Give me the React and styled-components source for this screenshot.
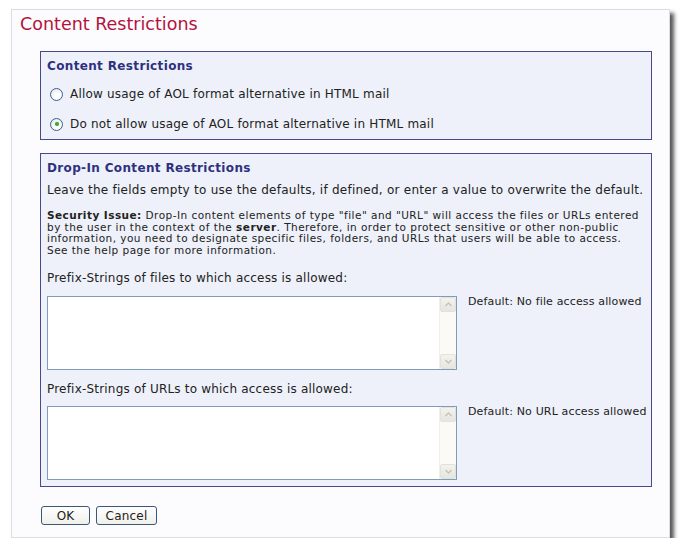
import React from 'react'
import styled, { createGlobalStyle } from 'styled-components'

const GlobalStyle = createGlobalStyle`
  body {
    margin: 0;
    background: #ffffff;
    font-family: "DejaVu Sans", Verdana, sans-serif;
    color: #222;
  }
`

const Page = styled.div`
  padding: 9px 0 0 11px;
`

const Panel = styled.div`
  width: 659px;
  height: 529px;
  box-sizing: border-box;
  background: #fcfbfe;
  border: 1px solid #dcdce2;
  box-shadow: 4px 4px 4px rgba(30, 30, 30, 0.75);
  padding: 3px 17px 0 8px;
`

const Title = styled.h1`
  margin: 0;
  font-size: 17.5px;
  font-weight: normal;
  line-height: 22px;
  color: #b3123c;
`

const Body = styled.div`
  padding: 16px 0 0 20px;
  display: flex;
  flex-direction: column;
  gap: 13px;
`

const Section = styled.fieldset`
  margin: 0;
  min-width: 0;
  border: 1px solid #48488a;
  background: #eef1f9;
  padding: ${p => p.$pad || '4px 6px'};
  display: flex;
  flex-direction: column;
`

const SectionTitle = styled.div`
  font-size: 12px;
  font-weight: bold;
  letter-spacing: 0.35px;
  color: #2e3180;
  line-height: 18px;
`

const RadioList = styled.div`
  display: flex;
  flex-direction: column;
  margin-top: 4px;
`

const RadioRow = styled.label`
  display: flex;
  align-items: center;
  gap: 7px;
  height: 30px;
  padding-left: 3px;
  font-size: 12px;
  letter-spacing: 0.2px;
  color: #222;
`

const Radio = styled.span`
  width: 11px;
  height: 11px;
  border-radius: 50%;
  border: 1px solid #3f5f8f;
  background: radial-gradient(circle at 60% 65%, #ffffff 30%, #d9dee6 100%);
  display: flex;
  align-items: center;
  justify-content: center;
  &::after {
    content: '';
    display: ${p => (p.$checked ? 'block' : 'none')};
    width: 4px;
    height: 4px;
    border-radius: 50%;
    background: #3aa83a;
    box-shadow: 0 0 1px #7cd07c;
  }
`

const Text = styled.p`
  margin: ${p => p.$m || '0'};
  font-size: ${p => p.$size || '12px'};
  line-height: ${p => p.$lh || '18px'};
  letter-spacing: ${p => p.$ls || '0.2px'};
  white-space: nowrap;
  color: #222;
`

const FieldRow = styled.div`
  display: flex;
  align-items: flex-start;
  gap: 11px;
`

const AreaBox = styled.div`
  flex: 0 0 410px;
  height: 74px;
  box-sizing: border-box;
  border: 1px solid #7f9db9;
  background: #ffffff;
  display: flex;
`

const Area = styled.textarea`
  flex: 1;
  min-width: 0;
  border: 0;
  outline: none;
  resize: none;
  background: transparent;
  font-family: inherit;
  font-size: 11px;
  padding: 2px;
`

const Scrollbar = styled.div`
  width: 16px;
  background: #fbfaf6;
  display: flex;
  flex-direction: column;
  justify-content: space-between;
  border-left: 1px solid #f0efe8;
`

const ScrollButton = styled.div`
  height: 15px;
  box-sizing: border-box;
  border: 1px solid #e2e1da;
  border-radius: 2px;
  background: linear-gradient(#f3f2ee, #e6e5de);
  display: flex;
  align-items: center;
  justify-content: center;
`

const Hint = styled.div`
  font-size: 11px;
  letter-spacing: 0.15px;
  line-height: 12px;
  white-space: nowrap;
  color: #222;
`

const Buttons = styled.div`
  display: flex;
  gap: 6px;
  padding: 6px 0 0 1px;
`

const Button = styled.button`
  height: 19px;
  width: ${p => p.$w};
  padding: 0;
  box-sizing: border-box;
  border: 1px solid #3c5678;
  border-radius: 3px;
  background: linear-gradient(#fefefe, #f0f0ea);
  font-family: inherit;
  font-size: 12px;
  letter-spacing: 0.2px;
  color: #222;
`

const Arrow = ({ up }) => (
  <svg width="7" height="5" viewBox="0 0 7 5">
    <path
      d={up ? 'M0.5 4 L3.5 1 L6.5 4' : 'M0.5 1 L3.5 4 L6.5 1'}
      fill="none"
      stroke="#c4c2b8"
      strokeWidth="1.3"
    />
  </svg>
)

const TextField = ({ hint }) => (
  <FieldRow>
    <AreaBox>
      <Area />
      <Scrollbar>
        <ScrollButton><Arrow up /></ScrollButton>
        <ScrollButton><Arrow /></ScrollButton>
      </Scrollbar>
    </AreaBox>
    <Hint>{hint}</Hint>
  </FieldRow>
)

export default function App() {
  return (
    <Page>
      <GlobalStyle />
      <Panel>
        <Title>Content Restrictions</Title>
        <Body>
          <Section $pad="5px 6px 0 6px">
            <SectionTitle>Content Restrictions</SectionTitle>
            <RadioList>
              <RadioRow>
                <Radio />
                Allow usage of AOL format alternative in HTML mail
              </RadioRow>
              <RadioRow>
                <Radio $checked />
                Do not allow usage of AOL format alternative in HTML mail
              </RadioRow>
            </RadioList>
          </Section>

          <Section $pad="5px 6px 6px 6px">
            <SectionTitle>Drop-In Content Restrictions</SectionTitle>
            <Text $m="4px 0 0 0" $ls="0.25px">
              Leave the fields empty to use the defaults, if defined, or enter a value to overwrite the default.
            </Text>
            <Text $size="10.5px" $lh="11.5px" $ls="0.46px" $m="11px 0 0 0">
              <b>Security Issue:</b> Drop-In content elements of type "file" and "URL" will access the files or URLs entered
              <br />
              by the user in the context of the <b>server</b>. Therefore, in order to protect sensitive or other non-public
              <br />
              information, you need to designate specific files, folders, and URLs that users will be able to access.
              <br />
              See the help page for more information.
            </Text>
            <Text $m="13px 0 9px 0">Prefix-Strings of files to which access is allowed:</Text>
            <TextField hint="Default: No file access allowed" />
            <Text $m="10px 0 8px 0">Prefix-Strings of URLs to which access is allowed:</Text>
            <TextField hint="Default: No URL access allowed" />
          </Section>

          <Buttons>
            <Button $w="49px">OK</Button>
            <Button $w="61px">Cancel</Button>
          </Buttons>
        </Body>
      </Panel>
    </Page>
  )
}
